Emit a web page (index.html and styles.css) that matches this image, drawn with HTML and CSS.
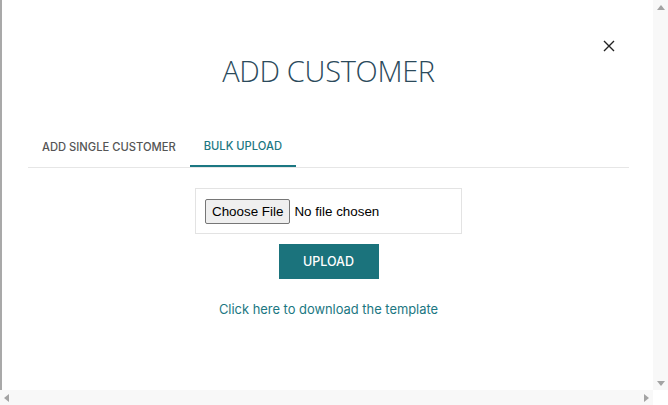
FILE: index.html
```html
<!DOCTYPE html>
<html lang="en">
<head>
<meta charset="utf-8">
<title>Add Customer</title>
<link rel="stylesheet" href="styles.css">
</head>
<body>
<div class="viewport">
  <main class="page">
    <div class="modal">
      <header class="modal-head">
        <span></span>
        <h1 class="title">ADD CUSTOMER</h1>
        <button class="close" aria-label="Close">
          <svg width="12" height="12" viewBox="0 0 12 12"><path d="M1 1 L11 11 M11 1 L1 11" stroke="#222" stroke-width="1.4" fill="none"/></svg>
        </button>
      </header>
      <nav class="tabs">
        <a class="tab">ADD SINGLE CUSTOMER</a>
        <a class="tab active">BULK UPLOAD</a>
      </nav>
      <section class="bulk">
        <div class="file-box">
          <label class="file">
            <span class="file-btn">Choose File</span>
            <span class="file-name">No file chosen</span>
          </label>
        </div>
        <button class="upload">UPLOAD</button>
        <a class="template">Click here to download the template</a>
      </section>
    </div>
  </main>
  <div class="vscroll">
    <span class="arrow up"></span>
    <span class="arrow down"></span>
  </div>
  <div class="hscroll">
    <span class="arrow left"></span>
    <span class="arrow right"></span>
  </div>
  <div class="corner"></div>
</div>
</body>
</html>
```
FILE: styles.css
```css
* { box-sizing: border-box; }
html, body { margin: 0; padding: 0; }
body { width: 668px; height: 405px; overflow: hidden; background: #fff; font-family: Inter, "Noto Sans", sans-serif; }

.viewport {
  display: grid;
  grid-template-columns: 653px 15px;
  grid-template-rows: 390px 15px;
  height: 405px;
}
.page {
  border-left: 2px solid #a9a9a9;
  background: #fff;
  overflow: hidden;
}
.modal { padding: 0 24px 0 26px; }

.modal-head {
  display: grid;
  grid-template-columns: 1fr auto 1fr;
  align-items: start;
  padding-top: 40px;
}
.title {
  margin: 13px 0 0;
  font-family: "Open Sans", sans-serif;
  font-weight: 300;
  font-size: 29px;
  line-height: 36px;
  color: #2b4a5b;
  letter-spacing: -0.3px;
}
.close {
  justify-self: end;
  margin-right: 14px;
  border: 0;
  background: none;
  padding: 0;
  width: 12px;
  height: 12px;
  display: flex;
}

.tabs {
  display: flex;
  margin-top: 38px;
  border-bottom: 1px solid #e6e6e6;
}
.tab {
  padding: 0 14px;
  height: 40px;
  display: flex;
  align-items: center;
  font-size: 11.2px;
  font-weight: 500;
  color: #555;
  letter-spacing: 0;
}
.tab.active {
  color: #1b7782;
  border-bottom: 2px solid #1b7782;
  margin-bottom: -1px;
}

.bulk {
  display: flex;
  flex-direction: column;
  align-items: center;
  padding-top: 20px;
}
.file-box {
  width: 267px;
  height: 46px;
  border: 1px solid #e3e3e3;
  padding: 0 9px;
  display: flex;
  align-items: center;
}
.file {
  display: flex;
  align-items: center;
  gap: 4px;
  font-family: "Liberation Sans", Arial, sans-serif;
  font-size: 13.4px;
  color: #000;
}
.file-btn {
  height: 25px;
  padding: 0 6px;
  display: flex;
  align-items: center;
  background: #efefef;
  border: 1px solid #767676;
  border-radius: 2px;
}
.upload {
  margin-top: 10px;
  width: 100px;
  height: 35px;
  border: 0;
  background: #1b737c;
  color: #fff;
  font-family: Inter, sans-serif;
  font-size: 12.5px;
  font-weight: 500;
}
.template {
  margin-top: 23px;
  font-size: 12.9px;
  color: #1b7782;
}

.vscroll {
  background: #f8f8f8;
  display: flex;
  flex-direction: column;
  justify-content: space-between;
  align-items: center;
  padding: 5px 0 4px;
}
.hscroll {
  background: #f8f8f8;
  display: flex;
  justify-content: space-between;
  align-items: center;
  padding: 0 4px 0 4px;
}
.corner { background: #fff; }
.arrow { width: 0; height: 0; border: 4px solid transparent; }
.arrow.up { border-bottom: 5px solid #a3a3a3; border-top: 0; }
.arrow.down { border-top: 5px solid #a3a3a3; border-bottom: 0; }
.arrow.left { border-right: 5px solid #a3a3a3; border-left: 0; }
.arrow.right { border-left: 5px solid #a3a3a3; border-right: 0; }
```
